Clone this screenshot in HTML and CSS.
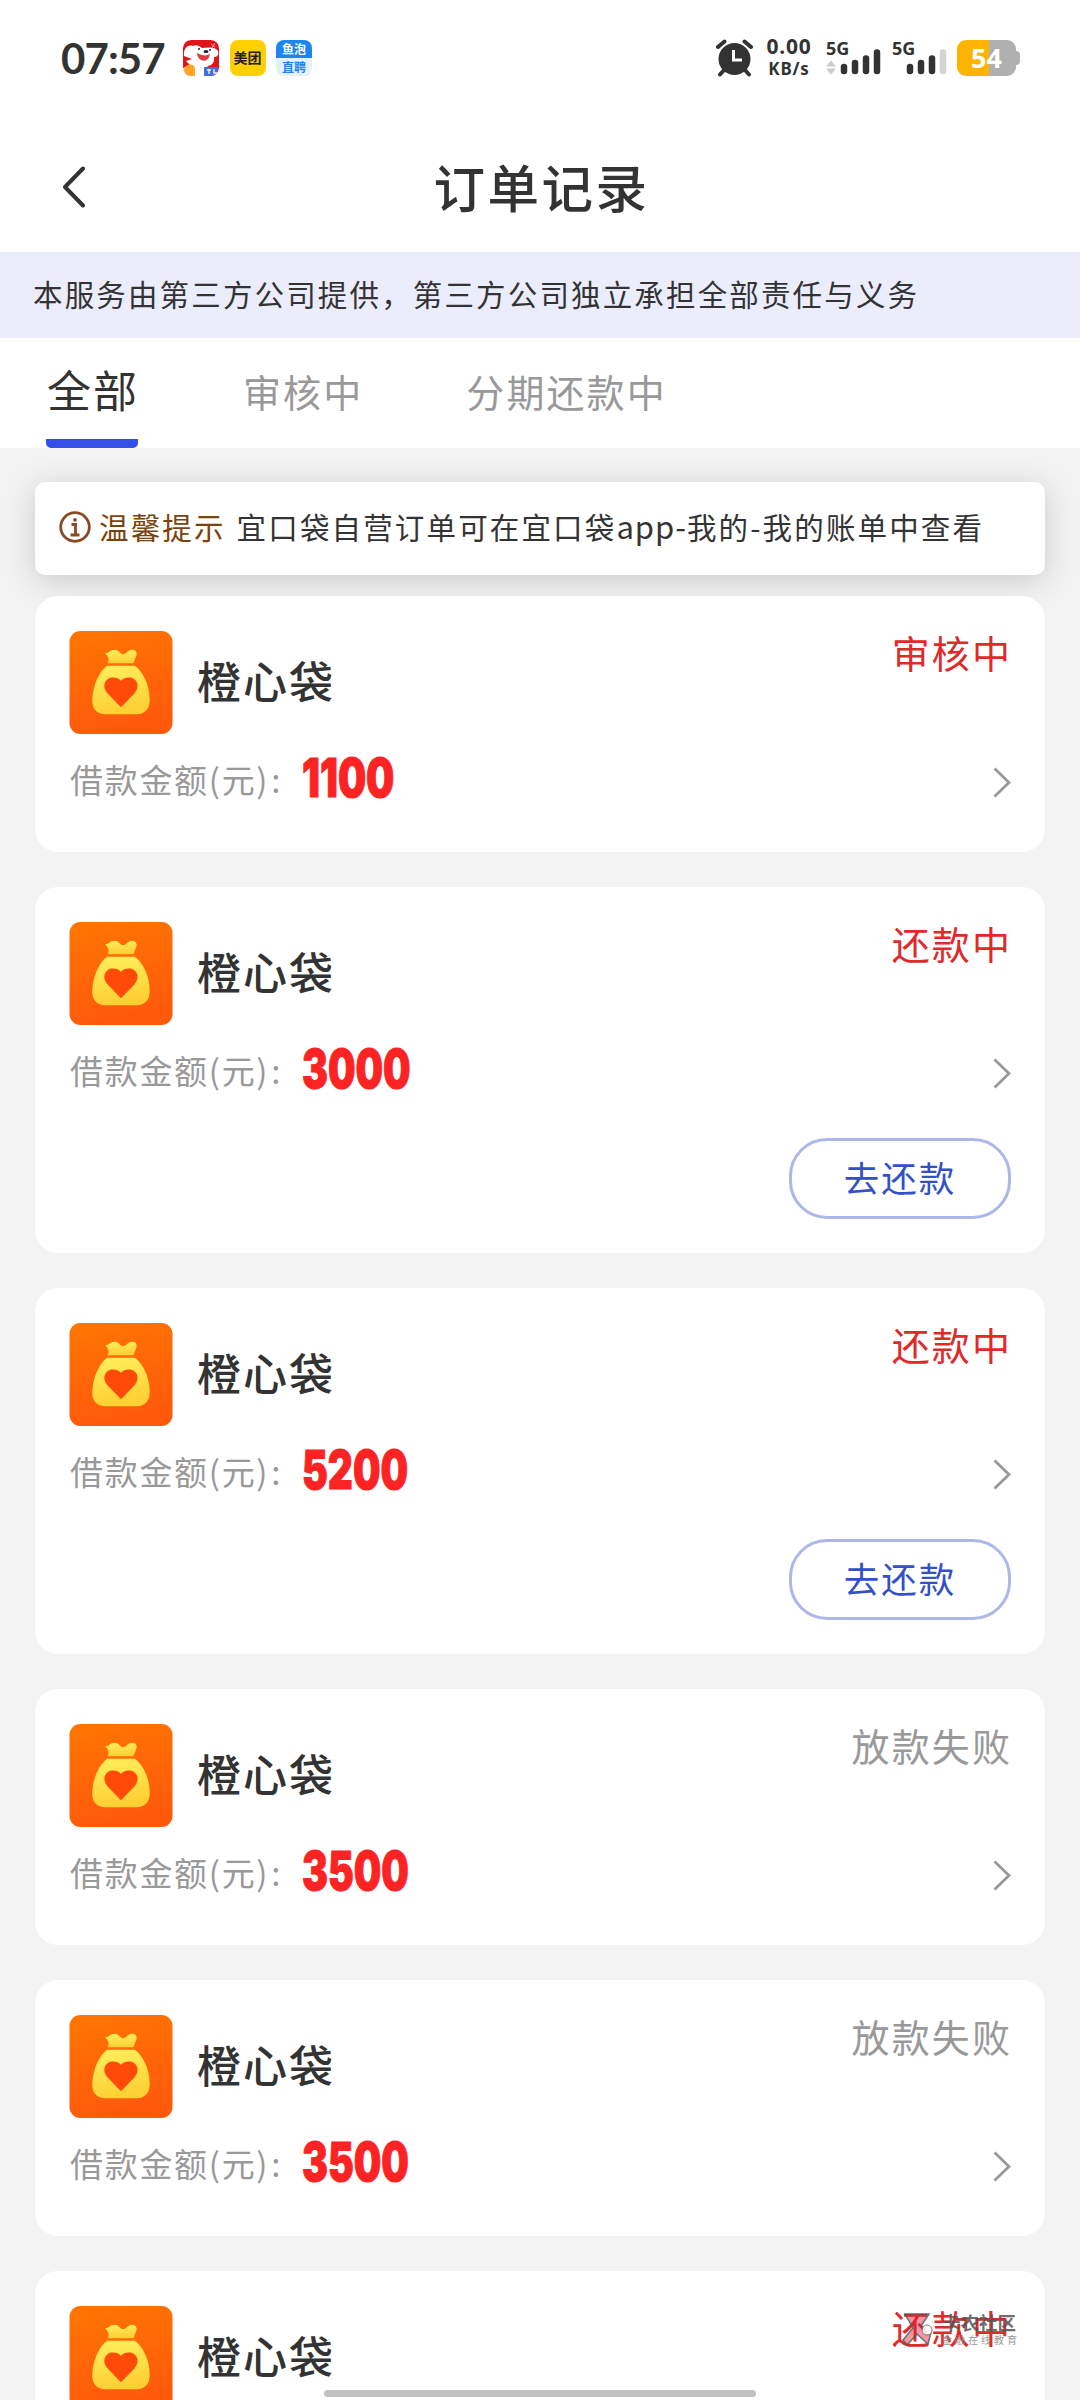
FILE: index.html
```html
<!DOCTYPE html>
<html lang="zh-CN">
<head>
<meta charset="utf-8">
<title>订单记录</title>
<link rel="stylesheet" href="styles.css">
</head>
<body>
<svg class="defs" width="0" height="0" aria-hidden="true">
  <defs>
    <linearGradient id="tile" x1="0" y1="0" x2="0.25" y2="1">
      <stop offset="0" stop-color="#ff7602"/><stop offset="1" stop-color="#ff5a0c"/>
    </linearGradient>
    <linearGradient id="gold" x1="0" y1="0" x2="0.2" y2="1">
      <stop offset="0" stop-color="#fff05e"/><stop offset="1" stop-color="#fdd033"/>
    </linearGradient>
    <symbol id="bag" viewBox="0 0 104 104">
      <rect width="104" height="104" rx="11" fill="url(#tile)"/>
      <path d="M36 22.500C39 23 41 19 46 19C50 19 51 23.500 54 23.500C58 23.500 58 19 63.500 19C67 19 68.500 22 67.500 25L64.500 32.500H38.500C40.500 29 39 25.500 36 22.500Z" fill="url(#gold)"/>
      <path d="M38 35H66C73 40 81 53 81 70C81 79 76 84 68 84H36C28 84 23 79 23 71C23 55 30 41 38 35Z" fill="url(#gold)"/>
      <path d="M52 77L38.500 63C31 54 38 46.500 44 47C48 47 50.500 48.500 52 50.500C53.500 48.500 56 47 60 47C66 46.500 73 54 65.500 63Z" fill="#ff4a08"/>
    </symbol>
    <symbol id="more" viewBox="0 0 18 31">
      <path d="M1.500 1.500L16 15.500L1.500 29.500" fill="none" stroke="#999" stroke-width="2.800"/>
    </symbol>
  </defs>
</svg>
<div class="screen">
  <header class="status-bar">
    <div class="status-left">
      <span class="clock">07:57</span>
      <svg class="app app-dog" viewBox="0 0 36 36">
        <rect width="36" height="36" rx="8" fill="#e0151c"/>
        <path d="M1 16C0 9 5 4 10 6C13 4 17 6 19 8C25 7 33 7 35 11C36 15 34 17 31 17C32 23 28 26 24 26L28 30V36H8C3 36 0 33 0 28L7 25L3 21L9 19Z" fill="#fff"/>
        <path d="M14 13C19 16 24 16 27 14C26 20 22 22 18 20C16 19 14 16 14 13Z" fill="#e23a40"/>
        <circle cx="16" cy="9" r="1" fill="#222"/><circle cx="27" cy="10" r="1" fill="#222"/><ellipse cx="23" cy="11.500" rx="2.500" ry="1.500" fill="#222"/>
        <path d="M2 27C6 23 12 24 12 29V36H8C3 36 1 33 1 29Z" fill="#ffa526"/>
        <path d="M21 27H35V28C35 33 33 36 28 36H21Z" fill="#3f6fe0"/>
        <path d="M24 30H28M26 29V34M31 29V33H34" stroke="#fff" stroke-width="1.300" fill="none"/>
        <path d="M28 4L32 7M32 3L29 8" stroke="#ff9aa0" stroke-width="1"/>
      </svg>
      <span class="app app-food">美团</span>
      <span class="app app-job"><b>鱼泡</b><i>直聘</i></span>
    </div>
    <div class="status-right">
      <svg class="alarm" viewBox="0 0 37 38">
        <circle cx="18.500" cy="20" r="16" fill="#333"/>
        <path d="M2 8L8.500 2.500M35 8L28.500 2.500M4 35.500L9 30M33 35.500L28 30" stroke="#333" stroke-width="4" stroke-linecap="round"/>
        <path d="M17.500 11V21H26" fill="none" stroke="#fff" stroke-width="3"/>
      </svg>
      <div class="speed"><span>0.00</span><span class="unit">KB/s</span></div>
      <svg class="signal" viewBox="0 0 58 42">
        <text x="0" y="17.500">5G</text>
        <path d="M0 29.500L5 23.500L10 29.500ZM0 31.500L5 37.500L10 31.500Z" fill="#ccc"/>
        <path d="M18 30V34M29 26V34M40 21.500V34M51 15.500V34" stroke="#333" stroke-width="6.500" stroke-linecap="round"/>
      </svg>
      <svg class="signal signal-2" viewBox="0 0 58 42">
        <text x="0" y="17.500">5G</text>
        <path d="M18 30V34M29 26V34M40 21.500V34" stroke="#333" stroke-width="6.500" stroke-linecap="round"/>
        <path d="M51 15.500V34" stroke="#d4d4d4" stroke-width="6.500" stroke-linecap="round"/>
      </svg>
      <div class="battery">54</div>
    </div>
  </header>

  <nav class="title-bar">
    <svg class="back" viewBox="0 0 24 42"><path d="M21 2.500L3 21L21 39.500" fill="none" stroke="#333" stroke-width="4" stroke-linecap="round" stroke-linejoin="round"/></svg>
    <h1>订单记录</h1>
  </nav>

  <p class="notice">本服务由第三方公司提供，第三方公司独立承担全部责任与义务</p>

  <div class="tabs">
    <span class="tab active">全部</span>
    <span class="tab">审核中</span>
    <span class="tab">分期还款中</span>
  </div>

  <main class="content">
    <div class="tip">
      <svg class="info" viewBox="0 0 32 32">
        <circle cx="16" cy="16" r="14.300" fill="none" stroke="#8a4a26" stroke-width="2.800"/>
        <circle cx="16" cy="8.800" r="1.900" fill="#8a4a26"/>
        <path d="M12.500 13.500H16.500V23.500M11.500 24H20.500" fill="none" stroke="#8a4a26" stroke-width="2.800"/>
      </svg>
      <span class="tip-label">温馨提示</span>
      <span class="tip-text">宜口袋自营订单可在宜口袋<span class="latin">app-</span>我的-我的账单中查看</span>
    </div>

    <section class="card">
      <div class="head"><svg class="logo"><use href="#bag"/></svg><h2>橙心袋</h2><span class="state red">审核中</span></div>
      <div class="row"><span class="label">借款金额(元)<span class="colon">:</span></span><span class="amount ones">1100</span><svg class="more"><use href="#more"/></svg></div>
    </section>
    <section class="card tall">
      <div class="head"><svg class="logo"><use href="#bag"/></svg><h2>橙心袋</h2><span class="state red">还款中</span></div>
      <div class="row"><span class="label">借款金额(元)<span class="colon">:</span></span><span class="amount">3000</span><svg class="more"><use href="#more"/></svg></div>
      <button class="repay">去还款</button>
    </section>
    <section class="card tall">
      <div class="head"><svg class="logo"><use href="#bag"/></svg><h2>橙心袋</h2><span class="state red">还款中</span></div>
      <div class="row"><span class="label">借款金额(元)<span class="colon">:</span></span><span class="amount">5200</span><svg class="more"><use href="#more"/></svg></div>
      <button class="repay">去还款</button>
    </section>
    <section class="card">
      <div class="head"><svg class="logo"><use href="#bag"/></svg><h2>橙心袋</h2><span class="state">放款失败</span></div>
      <div class="row"><span class="label">借款金额(元)<span class="colon">:</span></span><span class="amount">3500</span><svg class="more"><use href="#more"/></svg></div>
    </section>
    <section class="card">
      <div class="head"><svg class="logo"><use href="#bag"/></svg><h2>橙心袋</h2><span class="state">放款失败</span></div>
      <div class="row"><span class="label">借款金额(元)<span class="colon">:</span></span><span class="amount">3500</span><svg class="more"><use href="#more"/></svg></div>
    </section>
    <section class="card tall">
      <div class="head"><svg class="logo"><use href="#bag"/></svg><h2>橙心袋</h2><span class="state red">还款中</span></div>
    </section>
  </main>

  <div class="watermark">
    <svg viewBox="0 0 32 36">
      <path d="M4 2H28L20 14L30 20L27 32L16 22L6 33L2 28L12 16Z" fill="#e0203a" fill-opacity=".55" stroke="#555" stroke-width="1.500"/>
      <circle cx="26" cy="18" r="5" fill="#fff" stroke="#666" stroke-width="1"/>
    </svg>
    <div class="mark-text"><b>卡农社区</b><span>金融在线教育</span></div>
  </div>
  <div class="home-indicator"></div>
</div>
</body>
</html>
```
FILE: styles.css
```css
* { box-sizing: border-box; }

body {
  margin: 0;
  font-family: "Noto Sans CJK SC", sans-serif;
  color: #333;
}

h1, h2, p { margin: 0; }

.defs { position: absolute; }

.screen {
  position: relative;
  width: 1080px;
  height: 2400px;
  overflow: hidden;
  background: #f3f3f3;
}

/* status bar */
.status-bar {
  display: flex;
  justify-content: space-between;
  height: 120px;
  padding: 36px 61px 0 61px;
  background: #fff;
}

.status-left, .status-right { display: flex; align-items: flex-start; }

.clock {
  width: 122px;
  font: 700 42px/44px Lato, sans-serif;
  letter-spacing: -0.9px;
}

.app {
  width: 36px;
  height: 36px;
  margin: 4px 10.500px 0 0;
  border-radius: 8px;
  overflow: hidden;
}

.app-food {
  background: #ffd000;
  color: #222;
  font-size: 14px;
  font-weight: 700;
  line-height: 35px;
  text-align: center;
}

.app-job {
  display: flex;
  flex-direction: column;
  background: #e4f1fc;
  font-size: 12px;
  line-height: 18px;
  text-align: center;
}

.app-job b { background: #1a86ee; color: #fff; }
.app-job i { color: #1a86ee; font-style: normal; font-weight: 700; }

.alarm { width: 37px; height: 38px; margin: 3px 11px 0 0; }

.speed {
  display: flex;
  flex-direction: column;
  width: 50px;
  margin: 0 12px 0 0;
  align-items: center;
  font: 700 21px/21px "Noto Sans", sans-serif;
  letter-spacing: 0.8px;
}

.speed .unit { font-size: 17px; line-height: 24px; }

.signal { width: 58px; height: 42px; margin: 1px 8px 0 0; }
.signal text { font: 700 18px "Noto Sans", sans-serif; fill: #333; }
.signal-2 { margin-right: 7px; }

.battery {
  position: relative;
  width: 59px;
  height: 36px;
  margin: 4px 3px 0 0;
  border-radius: 9px;
  background: linear-gradient(90deg, #fdb400 32px, #b0b0b0 32px);
  color: #fff;
  font: 700 27px/36px "Noto Sans", sans-serif;
  text-align: center;
}

.battery::after {
  content: "";
  position: absolute;
  right: -4px;
  top: 11px;
  width: 4px;
  height: 14px;
  border-radius: 0 4px 4px 0;
  background: #b0b0b0;
}

/* title */
.title-bar {
  display: grid;
  grid-template-columns: 60px 1fr 60px;
  align-items: center;
  height: 132px;
  padding: 2px 59px 0 62px;
  background: #fff;
}

.back { width: 24px; height: 42px; }

.title-bar h1 {
  margin-top: -2px;
  font-size: 51.5px;
  font-weight: 500;
  line-height: 60px;
  letter-spacing: 2.500px;
  text-align: center;
}

.notice {
  height: 86px;
  padding-left: 33px;
  background: #ebedfd;
  font-size: 29.5px;
  line-height: 83px;
  letter-spacing: 2.15px;
  white-space: nowrap;
}

.tabs {
  display: flex;
  height: 110px;
  padding-left: 46px;
  background: #fff;
}

.tab {
  margin-right: 103px;
  color: #999;
  font-size: 38px;
  line-height: 106px;
  letter-spacing: 2.1px;
  white-space: nowrap;
}

.tab.active {
  width: 92px;
  margin-right: 105px;
  padding-left: 1px;
  border-bottom: 9px solid transparent;
  background: linear-gradient(#3550e6, #3550e6) bottom / 100% 9px no-repeat border-box;
  border-radius: 5px;
  color: #333;
  font-size: 44px;
  line-height: 102px;
  letter-spacing: 2px;
}

/* content */
.content {
  display: flex;
  flex-direction: column;
  padding: 34px 35px 0;
}

.tip {
  display: flex;
  align-items: center;
  flex: none;
  height: 93px;
  margin-bottom: 21px;
  padding: 0 0 4px 24px;
  border-radius: 10px;
  background: #fff;
  box-shadow: 0 6px 32px rgba(0, 0, 0, .17);
  font-size: 29.5px;
  letter-spacing: 2.15px;
  white-space: nowrap;
}

.info { width: 32px; height: 32px; margin: 1px 8px 0 0; }
.tip-label, .tip-text { margin-top: -2px; }
.tip-label { margin-right: 11px; color: #7b430c; }
.latin { font-size: 31px; letter-spacing: 0.9px; line-height: 30px; }

.card {
  position: relative;
  flex: none;
  height: 256px;
  margin-bottom: 35px;
  padding: 35px 34px;
  border-radius: 23px;
  background: #fff;
}

.card.tall { height: 366px; }

.head { display: flex; height: 103px; }
.logo { width: 104px; height: 103px; }

.head h2 {
  margin-left: 24px;
  font-size: 44px;
  font-weight: 500;
  line-height: 98px;
  letter-spacing: 2px;
}

.state {
  margin: 0 -1px 0 auto;
  color: #999;
  font-size: 38px;
  line-height: 42px;
  letter-spacing: 2.1px;
}

.state.red { color: #e02a2a; }

.row { display: flex; height: 81px; }

.label {
  width: 233px;
  padding-left: 1px;
  color: #999;
  font-size: 33px;
  line-height: 90px;
  letter-spacing: 1.700px;
  white-space: nowrap;
}

.colon { margin-left: 2px; }

.amount {
  color: #fb2323;
  font: 900 54px/87px Inter, sans-serif;
  -webkit-text-stroke: 1px #fb2323;
  transform: scaleX(.718);
  transform-origin: left;
}

.amount.ones { transform: scaleX(.735); }

.more { width: 18px; height: 31px; margin: 33px 0 0 auto; }

.repay {
  display: block;
  width: 222px;
  height: 81px;
  margin: 32px 0 0 auto;
  padding: 0 0 4px;
  border: 3px solid #adb7e8;
  border-radius: 38px;
  background: #fff;
  color: #3450c8;
  font-family: inherit;
  font-size: 35.5px;
  letter-spacing: 2px;
}

/* overlays */
.watermark {
  position: absolute;
  left: 901px;
  top: 2312px;
  display: flex;
  gap: 9px;
  opacity: .85;
}

.watermark svg { width: 32px; height: 36px; }
.mark-text { display: flex; flex-direction: column; color: #555; white-space: nowrap; }
.mark-text b { font-size: 18.5px; line-height: 21px; }
.mark-text span { color: #888; font-size: 10px; line-height: 14px; letter-spacing: 3px; }

.home-indicator {
  position: absolute;
  left: 324px;
  top: 2390px;
  width: 432px;
  height: 7px;
  border-radius: 4px;
  background: #c1c1c1;
}
```
